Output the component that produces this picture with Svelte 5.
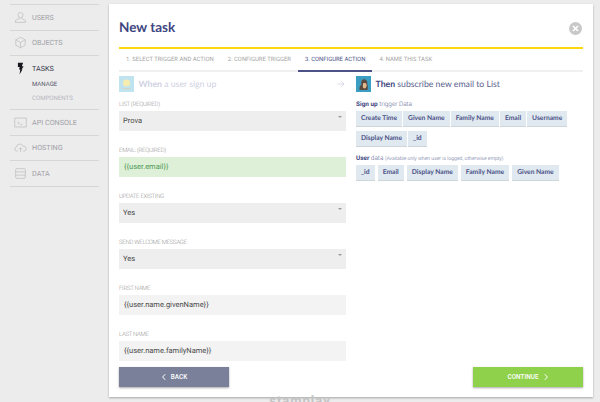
<script>
  const navItems = [
    { id: "users", label: "USERS" },
    { id: "objects", label: "OBJECTS" },
    { id: "tasks", label: "TASKS", active: true, children: ["MANAGE", "COMPONENTS"] },
    { id: "console", label: "API CONSOLE" },
    { id: "hosting", label: "HOSTING" },
    { id: "data", label: "DATA" }
  ];

  const tabs = [
    { label: "1. SELECT TRIGGER AND ACTION" },
    { label: "2. CONFIGURE TRIGGER" },
    { label: "3. CONFIGURE ACTION", active: true },
    { label: "4. NAME THIS TASK" }
  ];

  const fields = [
    { label: "LIST (REQUIRED)", value: "Prova", kind: "select" },
    { label: "EMAIL: (REQUIRED)", value: "{{user.email}}", kind: "valid" },
    { label: "UPDATE EXISTING", value: "Yes", kind: "select" },
    { label: "SEND WELCOME MESSAGE", value: "Yes", kind: "select" },
    { label: "FIRST NAME", value: "{{user.name.givenName}}", kind: "input" },
    { label: "LAST NAME", value: "{{user.name.familyName}}", kind: "input" }
  ];

  const triggerData = ["Create Time", "Given Name", "Family Name", "Email", "Username", "Display Name", "_id"];
  const userData = ["_id", "Email", "Display Name", "Family Name", "Given Name"];
</script>

<div class="page">
  <nav class="sidebar">
    {#each navItems as item}
      <div class="nav-item" class:active={item.active}>
        <div class="nav-row">
          <svg class="nav-icon" viewBox="0 0 16 16" aria-hidden="true">
            {#if item.id === "users"}
              <circle cx="8" cy="5" r="3.2" />
              <path d="M6.6 8v1.2L1.8 11.6v2.4h12.4v-2.4L9.4 9.2V8" />
            {:else if item.id === "objects"}
              <path d="M8 1.5l5.8 3.2v6.6L8 14.5l-5.800-3.200V4.700zM2.200 4.700L8 8l5.800-3.300M8 8v6.500" />
            {:else if item.id === "tasks"}
              <path class="solid" d="M4.800 1h6.400L9.600 5.300h2.200L9.400 9.200h1L6.800 15.500l.9-6.300H6.200l.8-3H4.800z" />
            {:else if item.id === "console"}
              <rect x="1" y="2.500" width="14" height="11" />
              <path d="M4.500 7l2 1.500-2 1.500M7.500 10.500h2.500" />
            {:else if item.id === "hosting"}
              <path d="M4.500 12.500H3.400a2.600 2.600 0 0 1-.4-5.100 4.200 4.200 0 0 1 8.100-1 3.100 3.100 0 0 1 1.500 6.100h-1.100M8 13.500V8.500M6 10.300l2-2 2 2" />
            {:else}
              <rect x="2" y="2" width="12" height="12" rx="1.500" />
              <path d="M2 6h12M2 10h12" />
            {/if}
          </svg>
          <span>{item.label}</span>
        </div>
        {#if item.children}
          <ul class="sub-list">
            {#each item.children as child, i}
              <li class:current={i === 0}>{child}</li>
            {/each}
          </ul>
        {/if}
      </div>
    {/each}
  </nav>

  <main class="main">
    <section class="card">
      <header class="card-header">
        <h1>New task</h1>
        <button class="close" aria-label="Close">
          <svg viewBox="0 0 14 14"><path d="M4.300 4.300l5.400 5.400M9.700 4.300l-5.400 5.400" /></svg>
        </button>
      </header>

      <div class="tabs">
        {#each tabs as tab}
          <div class="tab" class:active={tab.active}>{tab.label}</div>
        {/each}
      </div>

      <div class="columns">
        <div class="col">
          <div class="step-title faded">
            <span class="app-icon sun">
              <svg viewBox="0 0 15 16"><circle cx="7.500" cy="7" r="3.600" /><rect x="3.500" y="12" width="8" height="1" /></svg>
            </span>
            <span class="step-text"><b>When</b> a user sign up</span>
            <svg class="arrow" viewBox="0 0 8 8"><path d="M.5 4h6.500M4.300 1.200L7 4 4.300 6.800" /></svg>
          </div>

          {#each fields as field}
            <div class="field">
              <div class="field-label">{field.label}</div>
              <div class="control {field.kind}">
                {field.value}
                {#if field.kind === "select"}<i class="caret"></i>{/if}
              </div>
            </div>
          {/each}
        </div>

        <div class="col">
          <div class="step-title">
            <span class="app-icon chimp">
              <svg viewBox="0 0 15 16">
                <path class="chimp-body" d="M3.500 14c-.3-3 .5-4.500 2-5.200C4.600 6.500 5.600 3.500 8 3.300c2.500-.2 3.600 2.500 3.300 5 .7 1.600.6 3.800.2 5.700z" />
                <path class="chimp-face" d="M7 7.500c1.200-.8 3-.6 3.400.6.400 1.400.2 3.200-.8 4-1 .6-2.300.2-2.800-1z" />
              </svg>
            </span>
            <span class="step-text"><b>Then</b> subscribe new email to List</span>
          </div>

          <p class="data-heading"><b>Sign up</b> trigger Data</p>
          <div class="chips tight">
            {#each triggerData as chip}<span class="chip">{chip}</span>{/each}
          </div>

          <p class="data-heading"><b>User</b> data <small>(Available only when user is logged, otherwise empty)</small></p>
          <div class="chips">
            {#each userData as chip}<span class="chip">{chip}</span>{/each}
          </div>
        </div>
      </div>

      <footer class="actions">
        <button class="btn back">
          <svg viewBox="0 0 6 8"><path d="M4.200 1.200L1.600 4l2.600 2.800" /></svg>
          BACK
        </button>
        <button class="btn next">
          CONTINUE
          <svg viewBox="0 0 6 8"><path d="M1.800 1.200L4.400 4 1.800 6.800" /></svg>
        </button>
      </footer>
    </section>
    <div class="brand">stamplay</div>
  </main>
</div>

<style>
  :global(body) {
    margin: 0;
    background: #ececec;
  }

  .page {
    display: flex;
    height: 402px;
    overflow: hidden;
    font-family: Roboto, "Liberation Sans", sans-serif;
    text-rendering: geometricPrecision;
  }

  /* Sidebar */
  .sidebar {
    width: 89px;
    flex: none;
    margin: 4px 10px 0;
    border-top: 1px solid #d6d6d6;
  }

  .nav-item {
    border-bottom: 1px solid #d6d6d6;
  }

  .nav-row {
    display: flex;
    align-items: center;
    height: 24.500px;
    padding-left: 4px;
    gap: 5px;
    font-size: 7.200px;
    color: #a0a0a6;
  }

  .nav-icon {
    width: 13px;
    height: 13px;
    flex: none;
    fill: none;
    stroke: #b8b8b8;
    stroke-width: 0.800;
  }

  .nav-icon .solid {
    fill: #16161c;
    stroke: none;
  }

  .nav-item.active .nav-row {
    color: #34344a;
  }

  .sub-list {
    list-style: none;
    margin: -2.500px 0 0;
    padding: 0 0 3px 22px;
    font-size: 6.100px;
    color: #b6b6bc;
    line-height: 14px;
  }

  .sub-list .current {
    color: #55556a;
  }

  /* Card */
  .main {
    width: 484px;
    flex: none;
    margin-top: 4px;
  }

  .card {
    height: 393px;
    box-sizing: border-box;
    padding: 0 10px;
    background: #fff;
    box-shadow: 0 1px 2px rgba(0, 0, 0, 0.3);
    display: flex;
    flex-direction: column;
  }

  .card-header {
    height: 43px;
    flex: none;
    display: flex;
    align-items: center;
    justify-content: space-between;
    border-bottom: 2px solid #fbd80d;
  }

  h1 {
    margin: 2px 0 0;
    font-family: Lato, Roboto, sans-serif;
    font-size: 13.500px;
    font-weight: 700;
    color: #3d4580;
  }

  .close {
    width: 13px;
    height: 13px;
    margin: 5px 1px 0 0;
    padding: 0;
    border: 0;
    border-radius: 50%;
    background: #c8c8c8;
  }

  .close svg {
    display: block;
    fill: none;
    stroke: #fff;
    stroke-width: 1.800;
  }

  .tabs {
    display: flex;
    flex: none;
    height: 23px;
    box-sizing: border-box;
    border-bottom: 2px solid #f0f0f0;
  }

  .tab {
    height: 23px;
    box-sizing: border-box;
    padding: 0 7px;
    line-height: 22px;
    font-size: 5.900px;
    color: #a5a5a5;
    white-space: nowrap;
  }

  .tab.active {
    color: #4c5288;
    border-bottom: 2px solid #4c5288;
  }

  .columns {
    flex: 1;
    display: grid;
    grid-template-columns: 227px 228px;
    gap: 10px;
    min-height: 0;
  }

  .step-title {
    display: flex;
    align-items: center;
    height: 16px;
    margin-top: 4px;
    gap: 4.500px;
    font-family: Lato, Roboto, sans-serif;
    font-size: 8.700px;
    color: #5a5f8f;
    position: relative;
  }

  .step-text {
    margin-top: -1px;
  }

  .step-title b {
    color: #3d4580;
  }

  .step-title.faded,
  .step-title.faded b {
    color: #cfd1e2;
  }

  .app-icon {
    width: 15px;
    height: 16px;
    flex: none;
  }

  .app-icon svg {
    display: block;
  }

  .sun {
    background: #bfe3ef;
  }

  .sun circle {
    fill: #f6ecb0;
  }

  .sun rect {
    fill: #d8d4c4;
  }

  .chimp {
    background: #3b9dc2;
  }

  .chimp-body {
    fill: #5a4a3f;
  }

  .chimp-face {
    fill: #e3b98e;
  }

  .arrow {
    position: absolute;
    right: 1px;
    top: 4px;
    width: 8px;
    height: 8px;
    fill: none;
    stroke: #d0d2e0;
    stroke-width: 0.800;
  }

  .field {
    margin-top: 15px;
  }

  .step-title + .field {
    margin-top: 8px;
  }

  .field-label {
    height: 11px;
    line-height: 10px;
    font-size: 6px;
    font-weight: 300;
    letter-spacing: -0.280px;
    color: #959595;
  }

  .control {
    position: relative;
    height: 20px;
    line-height: 20px;
    padding-left: 5px;
    font-size: 7.500px;
    color: #4a4a4a;
  }

  .control.select {
    background: #eeeeee;
    padding-left: 4px;
  }

  .control.input {
    background: #f3f3f3;
  }

  .control.valid {
    background: #dff0d8;
    color: #4f9a56;
  }

  .caret {
    position: absolute;
    right: 4px;
    top: 5px;
    border-left: 2px solid transparent;
    border-right: 2px solid transparent;
    border-top: 2px solid #9a9a9a;
  }

  .data-heading {
    margin: 6px 0 1px;
    line-height: 10px;
    font-size: 6.400px;
    font-weight: 300;
    color: #5a5f8f;
  }

  .step-title + .data-heading {
    margin: 7px 0 2px;
  }

  .data-heading b {
    font-weight: 700;
    color: #3d4580;
  }

  .data-heading small {
    font-size: 5.100px;
  }

  .chips {
    display: flex;
    flex-wrap: wrap;
    gap: 3px;
  }

  .chips.tight {
    gap: 4px 1px;
  }

  .chip {
    height: 16px;
    padding: 0 5px;
    line-height: 15px;
    font-family: Lato, Roboto, sans-serif;
    font-size: 6.700px;
    font-weight: 700;
    color: #4c5288;
    background: #dfe9ef;
    border-bottom: 1px solid #cfd6da;
    box-sizing: border-box;
  }

  .actions {
    flex: none;
    display: flex;
    justify-content: space-between;
    margin-bottom: 10px;
  }

  .btn {
    height: 20px;
    width: 110px;
    padding: 0;
    border: 0;
    display: flex;
    align-items: center;
    justify-content: center;
    gap: 4px;
    color: #fff;
    font-family: inherit;
    font-size: 6.400px;
    font-weight: 500;
    box-shadow: 0 1px 2px rgba(0, 0, 0, 0.35);
  }

  .btn svg {
    width: 6px;
    height: 8px;
    fill: none;
    stroke: #fff;
    stroke-width: 1;
  }

  .back {
    background: #7a7f9a;
  }

  .next {
    background: #8fd14a;
  }

  .brand {
    width: 600px;
    margin: -2px 0 0 -109px;
    text-align: center;
    font-size: 13px;
    font-weight: 700;
    letter-spacing: 1px;
    color: #c4c4c4;
    line-height: 14px;
  }
</style>
